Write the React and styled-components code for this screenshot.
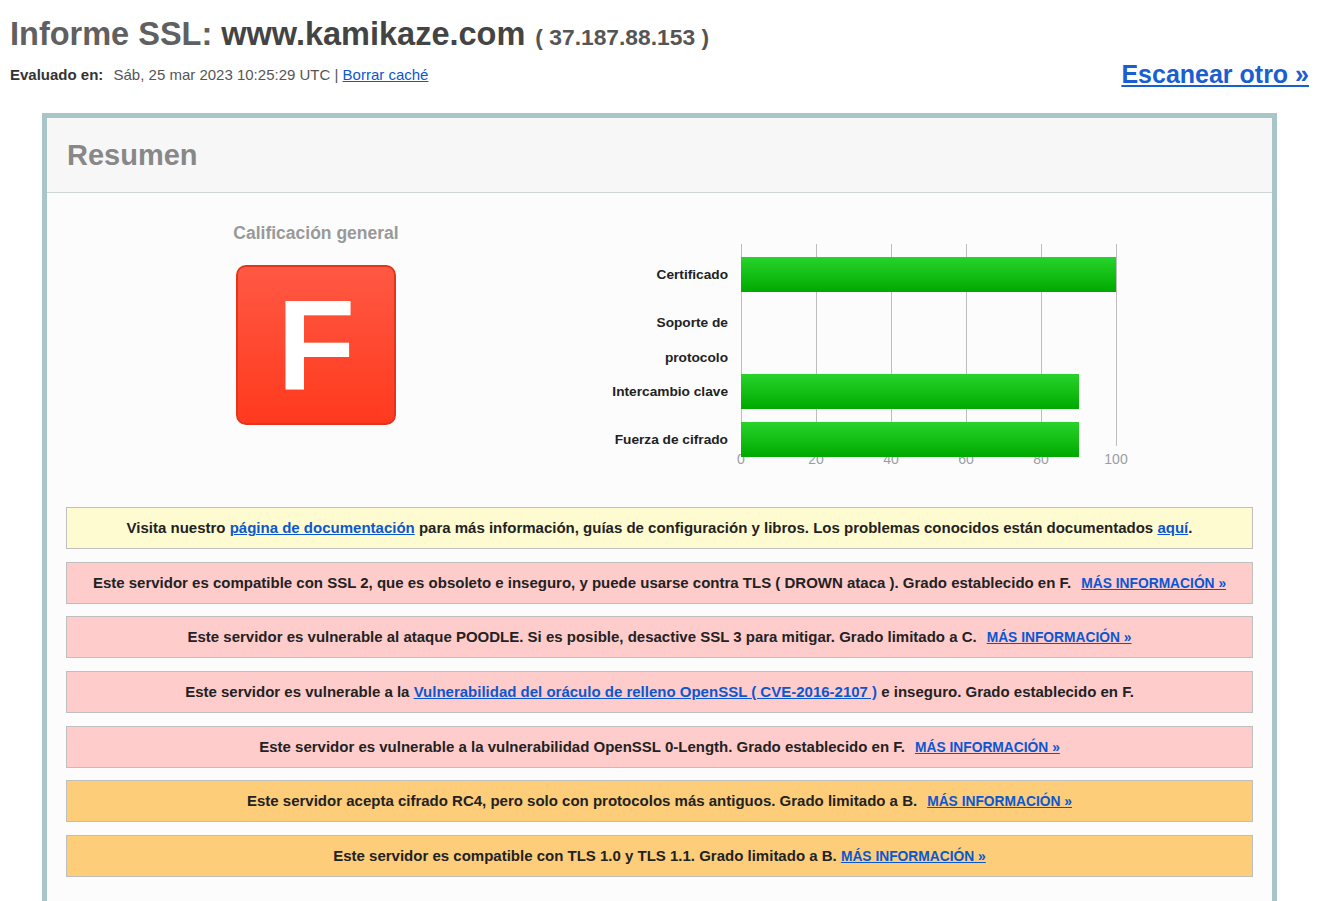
import React from "react";
import styled, { createGlobalStyle } from "styled-components";

const GlobalStyle = createGlobalStyle`
  body {
    margin: 0;
    background: #ffffff;
    font-family: "Liberation Sans", Arial, sans-serif;
    color: #222;
  }
`;

const Page = styled.div`
  padding: 15px 12px 0 10px;
`;

const Title = styled.h1`
  margin: 0;
  font-size: 32.5px;
  line-height: 38px;
  font-weight: bold;
  color: #606060;
  white-space: nowrap;

  .host {
    color: #444;
  }
  .ip {
    font-size: 22.8px;
    color: #555;
    margin-left: 10px;
  }
`;

const SubRow = styled.div`
  display: flex;
  justify-content: space-between;
  align-items: flex-end;
  margin-top: 3px;
`;

const Meta = styled.div`
  font-size: 15px;
  line-height: 17px;
  color: #555;
  padding-bottom: 6px;

  b {
    color: #333;
    margin-right: 6px;
  }
`;

const Link = styled.a`
  color: #0b57d0;
  text-decoration: underline;
  cursor: pointer;
`;

const ScanLink = styled(Link)`
  font-size: 25px;
  line-height: 30px;
  font-weight: bold;
  color: #1a5fd1;
`;

const Report = styled.div`
  margin: 24px 32px 0 32px;
  border: 5px solid #a8c5c7;
  border-bottom: none;
`;

const ReportHeader = styled.div`
  height: 74px;
  display: flex;
  align-items: center;
  padding: 0 20px;
  background: #f7f7f7;
  border-bottom: 1px solid #cdd6d6;
  font-size: 29px;
  font-weight: bold;
  color: #888;
`;

const ReportBody = styled.div`
  background: #fcfcfc;
  padding: 30px 19px 30px;
`;

const SummaryRow = styled.div`
  display: flex;
`;

const GradeCol = styled.div`
  width: 500px;
  display: flex;
  flex-direction: column;
  align-items: center;
`;

const GradeTitle = styled.div`
  font-size: 17.5px;
  line-height: 20px;
  font-weight: bold;
  color: #999;
`;

const GradeBox = styled.div`
  margin-top: 22px;
  width: 160px;
  height: 160px;
  box-sizing: border-box;
  border: 2px solid #e2361c;
  border-radius: 10px;
  background: linear-gradient(to bottom, #ff5843 0%, #ff3a1e 100%);
  display: flex;
  align-items: center;
  justify-content: center;
  color: #fff;
  font-size: 128px;
  font-weight: bold;
  line-height: 1;
`;

const Chart = styled.div`
  position: relative;
  margin-top: 21px;
  display: grid;
  grid-template-columns: 162px 375px;
  grid-template-rows: 35px 56px 35px 35px;
  column-gap: 13px;
  row-gap: 13px;
  padding-top: 13px;
`;

const Grid = styled.div`
  position: absolute;
  left: 175px;
  top: 0;
  width: 376px;
  height: 202px;
`;

const GridLine = styled.div`
  position: absolute;
  top: 0;
  bottom: 0;
  width: 1px;
  left: ${(p) => p.$left}px;
  background: #bdbdbd;
`;

const AxisLabel = styled.div`
  position: absolute;
  top: 207px;
  left: ${(p) => p.$left}px;
  transform: translateX(-50%);
  font-size: 14px;
  line-height: 16px;
  color: #9a9ea3;
`;

const BarLabel = styled.div`
  grid-column: 1;
  text-align: right;
  font-size: 13.7px;
  font-weight: bold;
  line-height: 35px;
  color: #222;
`;

const BarCell = styled.div`
  grid-column: 2;
  position: relative;
  z-index: 1;
`;

const Bar = styled.div`
  height: 35px;
  width: ${(p) => p.$value}%;
  background: linear-gradient(to bottom, #27d42b 0%, #00a900 100%);
`;

const Notices = styled.div`
  margin-top: 50px;
  display: flex;
  flex-direction: column;
  gap: 12.7px;
`;

const noticeColors = {
  info: "#fffbd0",
  error: "#ffcccc",
  warning: "#fecd7a",
};

const Notice = styled.div`
  height: 40px;
  border: 1px solid #bfbfbf;
  background: ${(p) => noticeColors[p.$kind]};
  line-height: 40px;
  text-align: center;
  font-size: 15px;
  font-weight: bold;
  color: #222;
  white-space: nowrap;
`;

const MoreLink = styled(Link)`
  font-size: 13.8px;
  margin-left: ${(p) => (p.$tight ? "0" : "10px")};
`;

const rows = [
  { label: ["Certificado"], value: 100 },
  { label: ["Soporte de", "protocolo"], value: 0 },
  { label: ["Intercambio clave"], value: 90 },
  { label: ["Fuerza de cifrado"], value: 90 },
];

const ticks = [0, 20, 40, 60, 80, 100];

export default function App() {
  return (
    <>
      <GlobalStyle />
      <Page>
        <Title>
          Informe SSL: <span className="host">www.kamikaze.com</span>
          <span className="ip">( 37.187.88.153 )</span>
        </Title>
        <SubRow>
          <Meta>
            <b>Evaluado en:</b> Sáb, 25 mar 2023 10:25:29 UTC | <Link>Borrar caché</Link>
          </Meta>
          <ScanLink>Escanear otro »</ScanLink>
        </SubRow>

        <Report>
          <ReportHeader>Resumen</ReportHeader>
          <ReportBody>
            <SummaryRow>
              <GradeCol>
                <GradeTitle>Calificación general</GradeTitle>
                <GradeBox>F</GradeBox>
              </GradeCol>
              <Chart>
                <Grid>
                  {ticks.map((t) => (
                    <GridLine key={t} $left={t * 3.75} />
                  ))}
                  {ticks.map((t) => (
                    <AxisLabel key={t} $left={t * 3.75}>
                      {t}
                    </AxisLabel>
                  ))}
                </Grid>
                {rows.map((r) => (
                  <React.Fragment key={r.label[0]}>
                    <BarLabel>
                      {r.label.map((l) => (
                        <div key={l}>{l}</div>
                      ))}
                    </BarLabel>
                    <BarCell>{r.value > 0 && <Bar $value={r.value} />}</BarCell>
                  </React.Fragment>
                ))}
              </Chart>
            </SummaryRow>

            <Notices>
              <Notice $kind="info">
                Visita nuestro <Link>página de documentación</Link> para más
                información, guías de configuración y libros. Los problemas
                conocidos están documentados <Link>aquí</Link>.
              </Notice>
              <Notice $kind="error">
                Este servidor es compatible con SSL 2, que es obsoleto e inseguro,
                y puede usarse contra TLS ( DROWN ataca ). Grado establecido en F.
                <MoreLink>MÁS INFORMACIÓN »</MoreLink>
              </Notice>
              <Notice $kind="error">
                Este servidor es vulnerable al ataque POODLE. Si es posible,
                desactive SSL 3 para mitigar. Grado limitado a C.
                <MoreLink>MÁS INFORMACIÓN »</MoreLink>
              </Notice>
              <Notice $kind="error">
                Este servidor es vulnerable a la{" "}
                <Link>Vulnerabilidad del oráculo de relleno OpenSSL ( CVE-2016-2107 )</Link>{" "}
                e inseguro. Grado establecido en F.
              </Notice>
              <Notice $kind="error">
                Este servidor es vulnerable a la vulnerabilidad OpenSSL 0-Length.
                Grado establecido en F.
                <MoreLink>MÁS INFORMACIÓN »</MoreLink>
              </Notice>
              <Notice $kind="warning">
                Este servidor acepta cifrado RC4, pero solo con protocolos más
                antiguos. Grado limitado a B.
                <MoreLink>MÁS INFORMACIÓN »</MoreLink>
              </Notice>
              <Notice $kind="warning">
                Este servidor es compatible con TLS 1.0 y TLS 1.1. Grado limitado a
                B. <MoreLink $tight>MÁS INFORMACIÓN »</MoreLink>
              </Notice>
            </Notices>
          </ReportBody>
        </Report>
      </Page>
    </>
  );
}
